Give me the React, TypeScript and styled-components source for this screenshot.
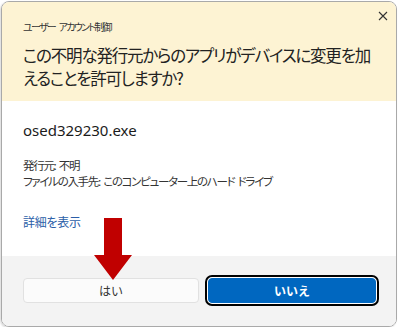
import React from "react"
import styled, { createGlobalStyle } from "styled-components"

const Global = createGlobalStyle`
    html, body {
        margin: 0;
        padding: 0;
        background: #ffffff;
    }
    body {
        font-family: "Noto Sans CJK JP", "Noto Sans", sans-serif;
        font-feature-settings: "palt";
        color: #1b1b1b;
    }
`

const Dialog = styled.div`
    position: relative;
    margin: 1px 0 0 1px;
    width: 396px;
    height: 326px;
    box-sizing: border-box;
    border: 1px solid #a9a9a9;
    border-radius: 8px;
    overflow: hidden;
    display: flex;
    flex-direction: column;
    box-shadow: -1px 1px 2px rgba(0,0,0,0.15);
`

const Header = styled.div`
    position: relative;
    height: 99px;
    background: #fdf3d3;
    padding: 18px 0 0 21px;
    box-sizing: border-box;
`

const Caption = styled.div`
    font-size: 10px;
    line-height: 14px;
    letter-spacing: -1.7px;
    word-spacing: 3px;
    color: #333;
`

const Question = styled.div`
    margin-top: 10px;
    font-size: 16.5px;
    line-height: 23px;
    letter-spacing: -1.2px;
    width: 355px;
    color: #222;
`

const Close = styled.button`
    position: absolute;
    top: 6px;
    right: 5px;
    width: 16px;
    height: 16px;
    padding: 0;
    border: none;
    background: transparent;
    display: flex;
    align-items: center;
    justify-content: center;
`

const Body = styled.div`
    flex: 1;
    background: #ffffff;
    padding: 20px 0 0 21px;
    box-sizing: border-box;
`

const FileName = styled.div`
    font-family: "Noto Sans", sans-serif;
    font-size: 15px;
    line-height: 18px;
    color: #1b1b1b;
`

const Info = styled.div`
    margin-top: 18px;
    font-size: 11.5px;
    line-height: 16px;
    letter-spacing: -1.3px;
    word-spacing: 2px;
    color: #333;
`

const Link = styled.a`
    display: inline-block;
    margin-top: 25px;
    font-size: 12px;
    line-height: 16px;
    letter-spacing: -0.3px;
    color: #2b5ea8;
    text-decoration: none;
`

const Footer = styled.div`
    height: 70px;
    background: #f3f3f3;
    padding: 22px 0 0 21px;
    box-sizing: border-box;
    display: flex;
    gap: 9px;
`

const Button = styled.button<{ $primary?: boolean }>`
    width: ${p => p.$primary ? "168px" : "176px"};
    height: 25px;
    box-sizing: border-box;
    border-radius: 4px;
    font-family: "Noto Sans CJK JP", sans-serif;
    font-size: 12px;
    padding: 0;
    border: 1px solid ${p => p.$primary ? "#0067c0" : "#e1e1e1"};
    background: ${p => p.$primary ? "#0067c0" : "#fbfbfb"};
    color: ${p => p.$primary ? "#ffffff" : "#333"};
    font-weight: ${p => p.$primary ? 700 : 400};
    outline: ${p => p.$primary ? "2px solid #000" : "none"};
    outline-offset: 1px;
    box-shadow: ${p => p.$primary ? "0 0 0 1px #fff" : "none"};
`

const Arrow = styled.svg`
    position: absolute;
    left: 91px;
    top: 216px;
`

const App = () => {
    return(
        <>
            <Global />
            <Dialog>
                <Header>
                    <Caption>ユーザー アカウント制御</Caption>
                    <Question>この不明な発行元からのアプリがデバイスに変更を加えることを許可しますか?</Question>
                    <Close aria-label="閉じる">
                        <svg width="10" height="10" viewBox="0 0 10 10">
                            <path d="M1 1 L9 9 M9 1 L1 9" stroke="#333" strokeWidth="1.1" />
                        </svg>
                    </Close>
                </Header>
                <Body>
                    <FileName>osed329230.exe</FileName>
                    <Info>
                        発行元: 不明<br />
                        ファイルの入手先: このコンピューター上のハード ドライブ
                    </Info>
                    <Link href="#">詳細を表示</Link>
                </Body>
                <Footer>
                    <Button>はい</Button>
                    <Button $primary>いいえ</Button>
                </Footer>
                <Arrow width="40" height="63" viewBox="0 0 40 63">
                    <polygon points="11,0 29,0 29,37 39,37 20,62 1,37 11,37" fill="#c00000" />
                </Arrow>
            </Dialog>
        </>
    )
}

export default App
